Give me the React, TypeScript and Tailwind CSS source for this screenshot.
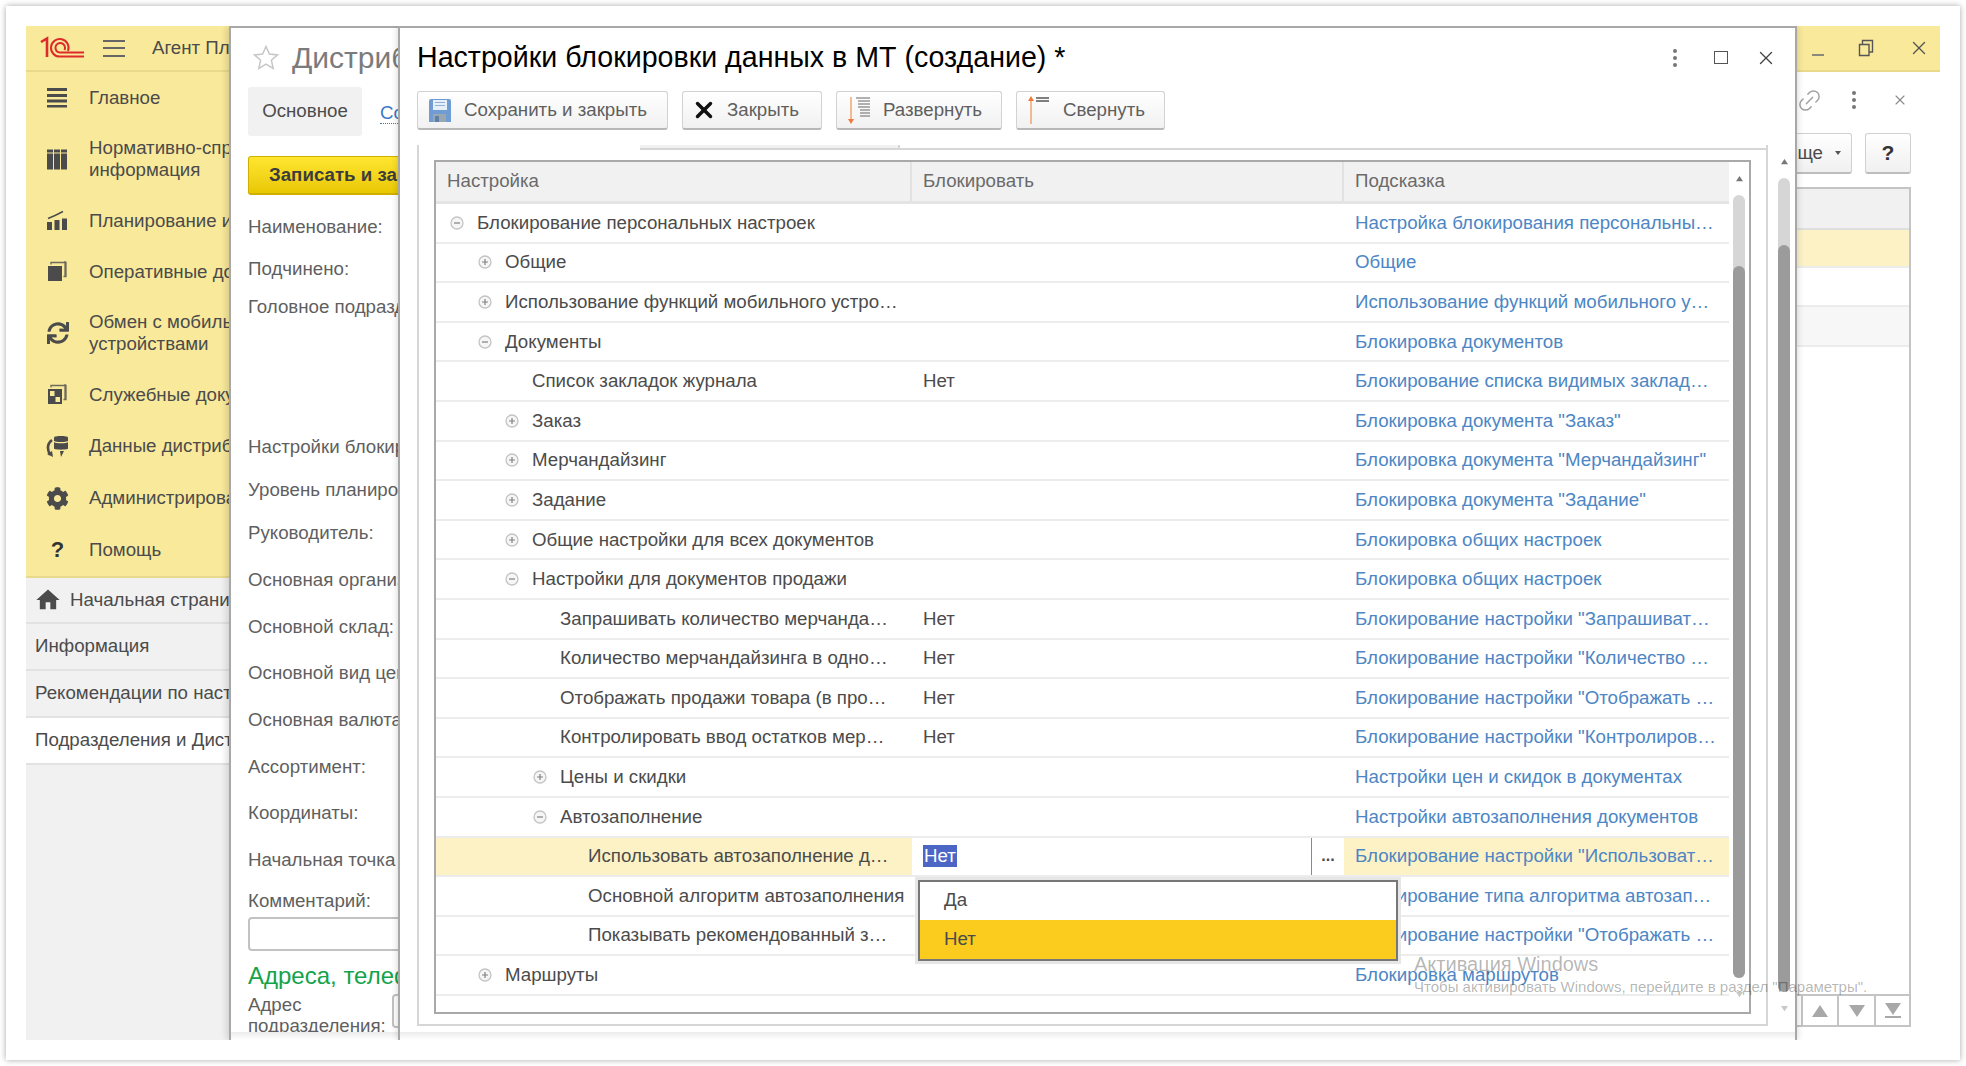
import { Link2, X } from "lucide-react";
import { FaCog, FaSync } from "react-icons/fa";
import { MdHome } from "react-icons/md";

const font = "font-['Liberation_Sans',Arial,sans-serif]";

const rows = [
  { text: "Блокирование персональных настроек", pad: "pl-[14px]", exp: "minus", hint: "Настройка блокирования персональны…" },
  { text: "Общие", pad: "pl-[42px]", exp: "plus", hint: "Общие" },
  { text: "Использование функций мобильного устро…", pad: "pl-[42px]", exp: "plus", hint: "Использование функций мобильного у…" },
  { text: "Документы", pad: "pl-[42px]", exp: "minus", hint: "Блокировка документов" },
  { text: "Список закладок журнала", pad: "pl-[69px]", val: "Нет", hint: "Блокирование списка видимых заклад…" },
  { text: "Заказ", pad: "pl-[69px]", exp: "plus", hint: 'Блокировка документа "Заказ"' },
  { text: "Мерчандайзинг", pad: "pl-[69px]", exp: "plus", hint: 'Блокировка документа "Мерчандайзинг"' },
  { text: "Задание", pad: "pl-[69px]", exp: "plus", hint: 'Блокировка документа "Задание"' },
  { text: "Общие настройки для всех документов", pad: "pl-[69px]", exp: "plus", hint: "Блокировка общих настроек" },
  { text: "Настройки для документов продажи", pad: "pl-[69px]", exp: "minus", hint: "Блокировка общих настроек" },
  { text: "Запрашивать количество мерчанда…", pad: "pl-[97px]", val: "Нет", hint: 'Блокирование настройки "Запрашиват…' },
  { text: "Количество мерчандайзинга в одно…", pad: "pl-[97px]", val: "Нет", hint: 'Блокирование настройки "Количество …' },
  { text: "Отображать продажи товара (в про…", pad: "pl-[97px]", val: "Нет", hint: 'Блокирование настройки "Отображать …' },
  { text: "Контролировать ввод остатков мер…", pad: "pl-[97px]", val: "Нет", hint: 'Блокирование настройки "Контролиров…' },
  { text: "Цены и скидки", pad: "pl-[97px]", exp: "plus", hint: "Настройки цен и скидок в документах" },
  { text: "Автозаполнение", pad: "pl-[97px]", exp: "minus", hint: "Настройки автозаполнения документов" },
  { text: "Использовать автозаполнение д…", pad: "pl-[125px]", selected: true, hint: 'Блокирование настройки "Использоват…' },
  { text: "Основной алгоритм автозаполнения", pad: "pl-[125px]", hint: "Блокирование типа алгоритма автозап…" },
  { text: "Показывать рекомендованный з…", pad: "pl-[125px]", hint: 'Блокирование настройки "Отображать …' },
  { text: "Маршруты", pad: "pl-[42px]", exp: "plus", hint: "Блокировка маршрутов" },
];

const labels = [
  { text: "Наименование:", h: "h-[42px]" },
  { text: "Подчинено:", h: "h-[42px]" },
  { text: "Головное подразделение:", h: "h-[34px] mb-[102px]" },
  { text: "Настройки блокировки данных в МТ:", h: "h-[42px]" },
  { text: "Уровень планирования:", h: "h-[44px]" },
  { text: "Руководитель:", h: "h-[42px]" },
  { text: "Основная организация:", h: "h-[52px]" },
  { text: "Основной склад:", h: "h-[42px]" },
  { text: "Основной вид цен:", h: "h-[50px]" },
  { text: "Основная валюта:", h: "h-[44px]" },
  { text: "Ассортимент:", h: "h-[50px]" },
  { text: "Координаты:", h: "h-[42px]" },
  { text: "Начальная точка маршрута:", h: "h-[52px]" },
  { text: "Комментарий:", h: "h-[30px]" },
];

const Expander = ({ kind }: { kind?: string }) => {
  if (!kind) return <span className="w-[14px] shrink-0" />;
  return (
    <svg width="14" height="14" viewBox="0 0 14 14" className="shrink-0">
      <circle cx="7" cy="7" r="6" fill="#f6f6f6" stroke="#c4c4c4" strokeWidth="1.3" />
      <path d={kind === "plus" ? "M4 7h6M7 4v6" : "M4 7h6"} stroke="#808080" strokeWidth="1.2" />
    </svg>
  );
};

const Tri = ({ down, small }: { down?: boolean; small?: boolean }) => (
  <svg width={small ? 7 : 16} height={small ? 7 : 12} viewBox="0 0 16 12">
    <path d={down ? "M0 0h16L8 12z" : "M8 0l8 12H0z"} fill={small ? "#777" : "#a8a8a8"} />
  </svg>
);

const Scrollbar = ({ track, thumbTop, cap }: { track: string; thumbTop: string; cap: string }) => (
  <div className="flex flex-col items-center">
    <div className={`${cap} flex items-center justify-center`}><Tri small /></div>
    <div className={`${track} w-[12px] rounded-full bg-[#d6d6d6] flex flex-col justify-end`}>
      <div className={`${thumbTop} w-[12px] rounded-full bg-[#9b9b9b]`} />
    </div>
    <div className={`${cap} flex items-center justify-center opacity-40`}><Tri small down /></div>
  </div>
);

const MenuIcon = ({ name }: { name: string }) => {
  if (name === "refresh") return <FaSync size={22} color="#4b4b4b" />;
  if (name === "gear") return <FaCog size={23} color="#4b4b4b" />;
  if (name === "help") return <span className="text-[22px] font-bold text-[#333]">?</span>;
  const shapes: Record<string, React.ReactNode> = {
    main: <path d="M1 2h20v3H1zM1 8h20v3H1zM1 13.500h20v3H1zM1 19h20v2.500H1z" />,
    table: <path d="M1 1.500h6v3H1zM8 1.500h6v3H8zM15 1.500h6v3h-6zM1 5.500h6v16H1zM8 5.500h6v16H8zM15 5.500h6v16h-6z" />,
    chart: (
      <>
        <path d="M1 13h5v8H1zM8.500 11h5v10h-5zM16 9.500h5V21h-5z" />
        <path d="M2 9.500l7-3 8-4" fill="none" stroke="#4b4b4b" strokeWidth="1.400" />
      </>
    ),
    docs: (
      <>
        <path d="M2 6h14v15H2z" />
        <path d="M5 4.500V2.500h15v14h-2.500M19 1v15.500" fill="none" stroke="#4b4b4b" strokeWidth="1.300" opacity="0.8" />
      </>
    ),
    check: (
      <>
        <path d="M2 6h14v15H2z" />
        <path d="M4 8h4.500v5H4zM9.500 14H14v5H9.500z" fill="#f9e99b" />
        <path d="M5 4.500V2.500h15v14h-2.500M19 1v15.500" fill="none" stroke="#4b4b4b" strokeWidth="1.300" opacity="0.8" />
      </>
    ),
    data: (
      <>
        <path d="M8 2.500c0-2 14-2 14 0v11c0 1.500-14 1.500-14 0z" />
        <path d="M8 6.500c2 1.500 12 1.500 14 0" fill="none" stroke="#f9e99b" strokeWidth="1.200" />
        <path d="M6 5C2 8 .5 13 4 20" fill="none" stroke="#4b4b4b" strokeWidth="2.600" />
        <path d="M1 19l6 3-1-6zM14 16l4 0-3 6z" />
      </>
    ),
  };
  return (
    <svg width="23" height="23" viewBox="0 0 23 23" fill="#4b4b4b">
      {shapes[name]}
    </svg>
  );
};

const menu = [
  { icon: "main", lines: ["Главное"], h: "h-[51px]" },
  { icon: "table", lines: ["Нормативно-справочная", "информация"], h: "h-[72px]" },
  { icon: "chart", lines: ["Планирование и анализ"], h: "h-[51px]" },
  { icon: "docs", lines: ["Оперативные документы"], h: "h-[51px]" },
  { icon: "refresh", lines: ["Обмен с мобильными", "устройствами"], h: "h-[72px]" },
  { icon: "check", lines: ["Служебные документы"], h: "h-[51px]" },
  { icon: "data", lines: ["Данные дистрибьюторов"], h: "h-[52px]" },
  { icon: "gear", lines: ["Администрирование"], h: "h-[52px]" },
  { icon: "help", lines: ["Помощь"], h: "h-[51px]" },
];

const Sidebar = () => (
  <div className="w-[203px] shrink-0 flex flex-col bg-[#f1f1f1] overflow-hidden">
    <div className="bg-[#f9e99b] border-b-2 border-[#e8d98c] pb-[1px]">
      {menu.map((m) => (
        <div key={m.icon} className={`${m.h} flex items-center`}>
          <div className="w-[63px] shrink-0 flex justify-center">
            <MenuIcon name={m.icon} />
          </div>
          <div className="whitespace-nowrap leading-[22px] text-[18.7px] text-[#4b4b4b]">
            {m.lines.map((l) => (
              <div key={l}>{l}</div>
            ))}
          </div>
        </div>
      ))}
    </div>
    <div className="h-[46px] flex items-center gap-[8px] pl-[8px] border-b-2 border-[#e2e2e2] whitespace-nowrap text-[18.7px] text-[#4b4b4b]">
      <MdHome size={28} color="#4b4b4b" className="shrink-0" />
      Начальная страница
    </div>
    {["Информация", "Рекомендации по настройке"].map((t) => (
      <div key={t} className="h-[47px] flex items-center pl-[9px] border-b-2 border-[#e2e2e2] whitespace-nowrap text-[18.7px] text-[#4b4b4b]">
        {t}
      </div>
    ))}
    <div className="h-[47px] flex items-center pl-[9px] bg-white border-b-2 border-[#e2e2e2] whitespace-nowrap text-[18.7px] text-[#4b4b4b]">
      Подразделения и Дистрибьюторы
    </div>
  </div>
);

const TopBar = () => (
  <div className="h-[46px] shrink-0 bg-[#f9e99b] border-b-2 border-[#e8d98c] flex items-center">
    <svg width="46" height="24" viewBox="0 0 46 24" className="ml-[13px] mb-[1px]" fill="none" stroke="#dd2b2b" strokeWidth="2">
      <path d="M2 6l6-3.500V21" strokeWidth="2.600" />
      <path d="M29 15A8.800 8.800 0 1 0 21 20.600H45" />
      <path d="M25.500 14A4.800 4.800 0 1 0 21 16.600H45" />
    </svg>
    <div className="ml-[18px] w-[22px] h-[17px] flex flex-col justify-between">
      <div className="h-[2px] bg-[#666]" />
      <div className="h-[2px] bg-[#666]" />
      <div className="h-[2px] bg-[#666]" />
    </div>
    <span className="ml-[27px] text-[18.7px] text-[#4b4b4b] whitespace-nowrap">Агент Плюс: Управление дистрибуцией</span>
    <div className="ml-auto flex items-center pr-[10px] gap-[34px]">
      <div className="w-[12px] h-[2px] bg-[#8a8a7a] mt-[14px]" />
      <svg width="16" height="18" viewBox="0 0 16 18" fill="none" stroke="#555" strokeWidth="1.400">
        <path d="M1.500 5.500h9.500v11H1.500zM4.500 5V1.500H14.500V13H11.500" />
      </svg>
      <X size={22} strokeWidth={1.500} color="#555" />
    </div>
  </div>
);

const RightPart = () => (
  <div className="flex-1 flex justify-end overflow-hidden bg-white">
    <div className="w-[240px] pr-[29px] flex flex-col shrink-0">
      <div className="h-[56px] pl-[96px] flex items-center">
        <Link2 size={27} strokeWidth={1.300} color="#a0a0a0" className="-rotate-45" />
        <div className="ml-[29px] flex flex-col gap-[3px]">
          <div className="w-[4px] h-[4px] rounded-full bg-[#777]" />
          <div className="w-[4px] h-[4px] rounded-full bg-[#777]" />
          <div className="w-[4px] h-[4px] rounded-full bg-[#777]" />
        </div>
        <X size={16} strokeWidth={1.600} color="#8a8a8a" className="ml-[36px]" />
      </div>
      <div className="h-[41px] mt-[5px] flex gap-[13px]">
        <div className="flex-1 flex items-center justify-end pr-[10px] gap-[12px] border border-[#d0d0d0] border-b-2 border-b-[#bdbdbd] rounded-[3px] bg-gradient-to-b from-white to-[#f0f0f0] text-[18.7px] text-[#4b4b4b]">
          Еще <span className="w-0 h-0 border-x-[3px] border-x-transparent border-t-[4px] border-t-[#555]" />
        </div>
        <div className="w-[46px] flex items-center justify-center border border-[#d0d0d0] border-b-2 border-b-[#bdbdbd] rounded-[3px] bg-gradient-to-b from-white to-[#f0f0f0] text-[21px] font-bold text-[#333]">
          ?
        </div>
      </div>
      <div className="h-[840px] mt-[13px] border-2 border-[#c4c4c4] flex flex-col">
        <div className="h-[41px] bg-[#f1f1f1] border-b-2 border-[#dedede] shrink-0" />
        <div className="h-[38px] bg-[#fdf2c6] border-b-2 border-[#ececec] shrink-0" />
        <div className="h-[39px] border-b-2 border-[#ececec] shrink-0" />
        <div className="h-[40px] border-b-2 border-[#ececec] bg-[#f7f7f7] shrink-0" />
        <div className="flex-1" />
        <div className="h-[31px] border-t-2 border-[#c4c4c4] flex justify-end shrink-0">
          <div className="w-[36px] border-l-2 border-[#c4c4c4] flex items-center justify-center"><Tri /></div>
          <div className="w-[37px] border-l-2 border-[#c4c4c4] flex items-center justify-center"><Tri down /></div>
          <div className="w-[35px] border-l-2 border-[#c4c4c4] flex flex-col items-center justify-center gap-[1px]">
            <Tri down />
            <div className="w-[16px] h-[2px] bg-[#a8a8a8]" />
          </div>
        </div>
      </div>
    </div>
  </div>
);

const FormWindow = () => (
  <div className="absolute left-[203px] top-0 bottom-0 w-[320px] flex flex-col bg-white border-l-2 border-t-2 border-[#a8a8a8] shadow-[-3px_0_6px_rgba(0,0,0,0.12)]">
    <div className="h-[1004px] shrink-0 overflow-hidden pl-[17px] whitespace-nowrap text-[18.7px] text-[#5f5f5f]">
      <div className="h-[59px] flex items-center gap-[13px] pl-[5px]">
        <svg width="26" height="25" viewBox="0 0 26 25" fill="#fff" stroke="#c6c6c6" strokeWidth="1.500">
          <path d="M13 1.500l3.400 7.600 8.100.8-6.100 5.400 1.800 8.100L13 19.200 5.800 23.400l1.800-8.100L1.500 9.900l8.100-.8z" />
        </svg>
        <span className="text-[30px] text-[#7b7b7b]">Дистрибьютор</span>
      </div>
      <div className="flex items-center h-[49px]">
        <div className="w-[114px] h-[49px] rounded-[3px] bg-[#f1f1f1] flex items-center justify-center text-[#4b4b4b]">Основное</div>
        <span className="ml-[18px] text-[#3b78c8] border-b border-dotted border-[#3b78c8] leading-[20px] mt-[3px]">Cостав</span>
      </div>
      <div className="mt-[20px] w-[300px] h-[39px] rounded-[3px] bg-gradient-to-b from-[#ffe62e] to-[#e9c700] border border-[#cfb000] border-b-2 flex items-center pl-[20px] font-bold text-[#3c3c3c]">
        Записать и закрыть
      </div>
      <div className="mt-[11px] flex flex-col">
        {labels.map((l) => (
          <div key={l.text} className={`${l.h} flex items-center`}>{l.text}</div>
        ))}
      </div>
      <div className="w-[300px] h-[34px] mt-[1px] border-2 border-[#c2c2c2] rounded-[4px]" />
      <div className="mt-[7px] h-[36px] flex items-center text-[24px] text-[#12a34b]">Адреса, телефоны</div>
      <div className="flex">
        <div className="w-[144px] leading-[21px]">Адрес<br />подразделения:</div>
        <div className="w-[100px] h-[34px] border-2 border-[#c2c2c2] rounded-[4px]" />
      </div>
    </div>
    <div className="flex-1 bg-gradient-to-b from-[#ececec] to-white" />
  </div>
);

const toolbar = [
  { label: "Сохранить и закрыть", w: "w-[251px]", icon: "save", gap: "gap-[13px] pl-[11px]" },
  { label: "Закрыть", w: "w-[140px]", icon: "close", gap: "gap-[10px] pl-[8px]" },
  { label: "Развернуть", w: "w-[166px]", icon: "expand", gap: "gap-[13px] pl-[11px]" },
  { label: "Свернуть", w: "w-[149px]", icon: "collapse", gap: "gap-[13px] pl-[11px]" },
];

const ToolIcon = ({ name }: { name: string }) => {
  if (name === "save")
    return (
      <svg width="22" height="23" viewBox="0 0 22 23">
        <path d="M0 2a2 2 0 0 1 2-2h18a2 2 0 0 1 2 2v21H4l-4-0z" fill="#6f9dd3" />
        <path d="M4 1h14v10H4z" fill="#e6eef7" />
        <path d="M6 3.500h10M6 6.500h10" stroke="#8fb0d8" strokeWidth="1.200" />
        <path d="M4 15h13v8H4z" fill="#9aa6b2" />
        <path d="M6 17h4v6H6z" fill="#5e7fa8" />
      </svg>
    );
  if (name === "close") return <X size={26} strokeWidth={3.200} color="#111" />;
  if (name === "expand")
    return (
      <svg width="22" height="28" viewBox="0 0 22 28">
        <path d="M3 1v23" stroke="#ef9a62" strokeWidth="1.300" />
        <path d="M0 23h6l-3 5z" fill="#ef7a3a" />
        <path d="M8 2h14M10 5h12M10 8h12M10 11h12M12 14h10M12 17h10M12 20h10" stroke="#666" strokeWidth="1.200" />
      </svg>
    );
  return (
    <svg width="22" height="28" viewBox="0 0 22 28">
      <path d="M3 4v24" stroke="#ef9a62" strokeWidth="1.300" />
      <path d="M0 5h6L3 0z" fill="#ef7a3a" />
      <path d="M8 2h13M8 5h13" stroke="#555" strokeWidth="1.400" />
    </svg>
  );
};

const SettingsTable = () => (
  <div className="ml-[15px] mt-[10px] w-[1317px] h-[854px] border-2 border-[#a9a9a9] flex">
    <div className="w-[1293px] relative">
      <div className="h-[42px] bg-[#f1f1f1] border-b-[3px] border-[#e4e4e4] flex text-[18.7px] text-[#6a6a6a]">
        <div className="w-[476px] pl-[11px] flex items-center border-r-2 border-[#e2e2e2]">Настройка</div>
        <div className="w-[432px] pl-[11px] flex items-center border-r-2 border-[#e2e2e2]">Блокировать</div>
        <div className="flex-1 pl-[11px] flex items-center">Подсказка</div>
      </div>
      {rows.map((r) => (
        <div key={r.text} className="h-[39.6px] border-b-2 border-[#ececec] flex text-[18.7px] text-[#4b4b4b] whitespace-nowrap">
          <div className={`${r.pad} ${r.selected ? "bg-[#fdf2c6]" : ""} w-[476px] flex items-center gap-[13px]`}>
            <Expander kind={r.exp} />
            {r.text}
          </div>
          <div className="w-[432px] pl-[11px] flex items-center">
            {r.val}
            {r.selected && (
              <>
                <span className="bg-[#4c66c6] text-white h-[22px] flex items-center px-[1px]">Нет</span>
                <span className="ml-auto h-full w-[33px] border-l border-[#8a8a8a] flex items-center justify-center font-bold pb-[1px] text-[16px]">...</span>
              </>
            )}
          </div>
          <div className={`${r.selected ? "bg-[#fdf2c6]" : ""} flex-1 pl-[11px] flex items-center text-[#4d86c4]`}>{r.hint}</div>
        </div>
      ))}
      {/* выпадающий список */}
      <div className="absolute left-[482px] top-[718px] w-[480px] h-[81px] border-2 border-[#777] bg-white shadow-[0_0_0_3px_#e6e6e6] text-[18.7px] text-[#4b4b4b] flex flex-col">
        <div className="h-[38px] pl-[24px] pb-[2px] flex items-center">Да</div>
        <div className="flex-1 pl-[24px] flex items-center bg-[#fbcb1e]">Нет</div>
      </div>
    </div>
    <div className="flex-1">
      <Scrollbar cap="h-[33px]" track="h-[783px]" thumbTop="h-[712px]" />
    </div>
  </div>
);

const Dialog = () => (
  <div className="absolute left-[372px] top-0 bottom-0 w-[1399px] flex flex-col bg-white border-x-2 border-t-2 border-[#a8a8a8] shadow-[0_0_7px_rgba(0,0,0,0.18)]">
    <div className="h-[1004px] shrink-0 flex flex-col pl-[17px]">
      <div className="h-[63px] shrink-0 flex items-center pb-[4px]">
        <span className="text-[28.6px] text-black whitespace-nowrap">Настройки блокировки данных в МТ (создание) *</span>
        <div className="ml-auto flex items-center pr-[18px]">
          <div className="flex flex-col gap-[3px]">
            <div className="w-[4px] h-[4px] rounded-full bg-[#777]" />
            <div className="w-[4px] h-[4px] rounded-full bg-[#777]" />
            <div className="w-[4px] h-[4px] rounded-full bg-[#777]" />
          </div>
          <div className="ml-[37px] w-[14px] h-[13px] border-[1.5px] border-[#555]" />
          <X size={22} strokeWidth={1.500} color="#444" className="ml-[27px]" />
        </div>
      </div>
      <div className="flex gap-[14px] h-[39px] shrink-0">
        {toolbar.map((b) => (
          <div key={b.label} className={`${b.w} ${b.gap} flex items-center rounded-[3px] border border-[#d2d2d2] border-b-2 border-b-[#b8b8b8] bg-gradient-to-b from-white to-[#f1f1f1] text-[18.7px] text-[#5f5f5f] whitespace-nowrap`}>
            <ToolIcon name={b.icon} />
            {b.label}
          </div>
        ))}
      </div>
      <div className="mt-[15px] flex flex-1 pb-[6px]">
        <div className="w-[1351px] border-x-2 border-b-2 border-[#d6d6d6] flex flex-col">
          <div className="h-[5px] flex shrink-0">
            <div className="w-[221px]" />
            <div className="w-[260px] bg-[#f1f1f1] border-b-2 border-r-2 border-[#d6d6d6]" />
            <div className="flex-1 border-b-2 border-[#d6d6d6]" />
          </div>
          <SettingsTable />
        </div>
        <div className="flex-1 pl-[10px]">
          <div className="w-[12px]">
            <Scrollbar cap="h-[33px]" track="h-[814px]" thumbTop="h-[747px]" />
          </div>
        </div>
      </div>
    </div>
    <div className="flex-1 bg-gradient-to-b from-[#ececec] to-white" />
  </div>
);

export default function App() {
  return (
    <div className={`${font} w-[1966px] h-[1066px] bg-white p-[6px] overflow-hidden relative`}>
      <div className="h-[1054px] w-[1954px] bg-white p-[20px] shadow-[0_0_6px_rgba(0,0,0,0.35)]">
        <div className="relative w-[1914px] h-[1014px] overflow-hidden flex flex-col">
          <TopBar />
          <div className="flex flex-1 min-h-0">
            <Sidebar />
            <RightPart />
          </div>
          <FormWindow />
          <Dialog />
        </div>
      </div>
      {/* водяной знак активации */}
      <div className="absolute left-[1414px] top-[952px] pointer-events-none whitespace-nowrap text-black/30">
        <div className="text-[20px] leading-[24px]">Активация Windows</div>
        <div className="text-[15px] leading-[21px]">Чтобы активировать Windows, перейдите в раздел "Параметры".</div>
      </div>
    </div>
  );
}
